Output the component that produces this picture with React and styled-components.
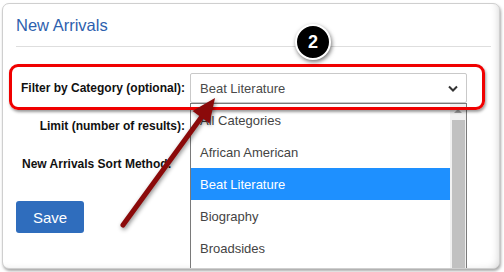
import React from "react";
import styled, { createGlobalStyle } from "styled-components";

const Global = createGlobalStyle`
  html, body { margin: 0; padding: 0; background: #ffffff; }
  body { font-family: "Liberation Sans", Arial, sans-serif; }
  * { box-sizing: border-box; }
`;

const Page = styled.div`
  position: relative;
  width: 504px;
  height: 272px;
  overflow: hidden;
`;

const Panel = styled.div`
  position: relative;
  margin: 3px 0 0 2px;
  width: 498px;
  height: 266px;
  border: 1px solid #cfcfcf;
  border-radius: 7px;
  background: #fff;
  box-shadow: 1px 2px 3px rgba(0, 0, 0, 0.35), inset -6px -3px 8px -6px rgba(0, 0, 0, 0.18);
  padding: 11px 8px 0 13px;
  overflow: hidden;
`;

const Title = styled.h2`
  margin: 0;
  font-size: 16.5px;
  line-height: 20px;
  font-weight: normal;
  color: #2e5fae;
`;

const Rule = styled.hr`
  margin: 11px 0 0 0;
  border: 0;
  border-top: 1px solid #dedede;
  height: 0;
`;

const Form = styled.div`
  display: grid;
  grid-template-columns: 169px 277px;
  grid-auto-rows: 30px;
  column-gap: 5px;
  row-gap: 8px;
  margin-top: 26px;
`;

const Label = styled.label`
  display: flex;
  align-items: center;
  justify-content: ${(p) => (p.$left ? "flex-start" : "flex-end")};
  padding-left: ${(p) => (p.$left ? "6px" : "0")};
  font-size: 12px;
  font-weight: bold;
  color: #111;
  white-space: nowrap;
`;

const SelectBox = styled.div`
  display: flex;
  align-items: center;
  justify-content: space-between;
  border: 1px solid #c9c9c9;
  border-radius: 2px;
  background: #fff;
  padding: 0 8px 0 9px;
  font-size: 13px;
  color: #4a4a4a;
`;

const SaveButton = styled.button`
  display: block;
  margin-top: 22px;
  width: 68px;
  height: 32px;
  border: 0;
  border-radius: 3px;
  background: #2f6dbd;
  color: #fff;
  font-family: "Liberation Sans", Arial, sans-serif;
  font-size: 15px;
  padding: 0;
`;

const Dropdown = styled.div`
  position: absolute;
  left: 187px;
  top: 99px;
  width: 277px;
  height: 180px;
  display: flex;
  border: 1px solid #7a7a7a;
  background: #fff;
`;

const List = styled.ul`
  list-style: none;
  margin: 0;
  padding: 0;
  flex: 1;
`;

const Item = styled.li`
  height: 32px;
  display: flex;
  align-items: center;
  padding-left: 9px;
  font-size: 13px;
  color: ${(p) => (p.$active ? "#ffffff" : "#444444")};
  background: ${(p) => (p.$active ? "#1e90ff" : "transparent")};
`;

const Scrollbar = styled.div`
  width: 16px;
  background: #f1f1f1;
  display: flex;
  flex-direction: column;
  align-items: center;
`;

const UpArrow = styled.div`
  margin-top: 5px;
  width: 0;
  height: 0;
  border-left: 4px solid transparent;
  border-right: 4px solid transparent;
  border-bottom: 4px solid #a3a3a3;
`;

const Thumb = styled.div`
  margin-top: 7px;
  width: 13px;
  flex: 1;
  background: #c1c1c1;
`;

const Highlight = styled.div`
  position: absolute;
  left: 9px;
  top: 64px;
  width: 476px;
  height: 46px;
  border: 3px solid #f00000;
  border-radius: 9px;
  box-shadow: 1px 2px 3px rgba(0, 0, 0, 0.4);
  pointer-events: none;
`;

const Badge = styled.div`
  position: absolute;
  left: 295px;
  top: 24px;
  width: 36px;
  height: 36px;
  border-radius: 50%;
  background: #000;
  border: 2px solid #fff;
  box-shadow: 1px 2px 4px rgba(0, 0, 0, 0.55);
  color: #fff;
  font-size: 18px;
  font-weight: bold;
  display: flex;
  align-items: center;
  justify-content: center;
`;

const ArrowLayer = styled.svg`
  position: absolute;
  left: 0;
  top: 0;
  pointer-events: none;
  filter: drop-shadow(1px 2px 2px rgba(0, 0, 0, 0.45));
`;

const Chevron = () => (
  <svg width="10" height="7" viewBox="0 0 10 7">
    <polyline points="1,1.5 5,5.5 9,1.5" fill="none" stroke="#333" strokeWidth="2" />
  </svg>
);

const items = ["All Categories", "African American", "Beat Literature", "Biography", "Broadsides"];

export default function App() {
  return (
    <Page>
      <Global />
      <Panel>
        <Title>New Arrivals</Title>
        <Rule />
        <Form>
          <Label>Filter by Category (optional):</Label>
          <SelectBox>
            <span>Beat Literature</span>
            <Chevron />
          </SelectBox>
          <Label>Limit (number of results):</Label>
          <SelectBox />
          <Label $left>New Arrivals Sort Method:</Label>
          <SelectBox />
        </Form>
        <SaveButton>Save</SaveButton>
        <Dropdown>
          <List>
            {items.map((t) => (
              <Item key={t} $active={t === "Beat Literature"}>
                {t}
              </Item>
            ))}
          </List>
          <Scrollbar>
            <UpArrow />
            <Thumb />
          </Scrollbar>
        </Dropdown>
      </Panel>
      <Highlight />
      <Badge>2</Badge>
      <ArrowLayer width="504" height="272" viewBox="0 0 504 272">
        <line x1="123" y1="225" x2="203" y2="115" stroke="#8b0a0a" strokeWidth="5" strokeLinecap="round" />
        <polygon points="215,98 209.5,123.5 192.5,111" fill="#8b0a0a" />
      </ArrowLayer>
    </Page>
  );
}
